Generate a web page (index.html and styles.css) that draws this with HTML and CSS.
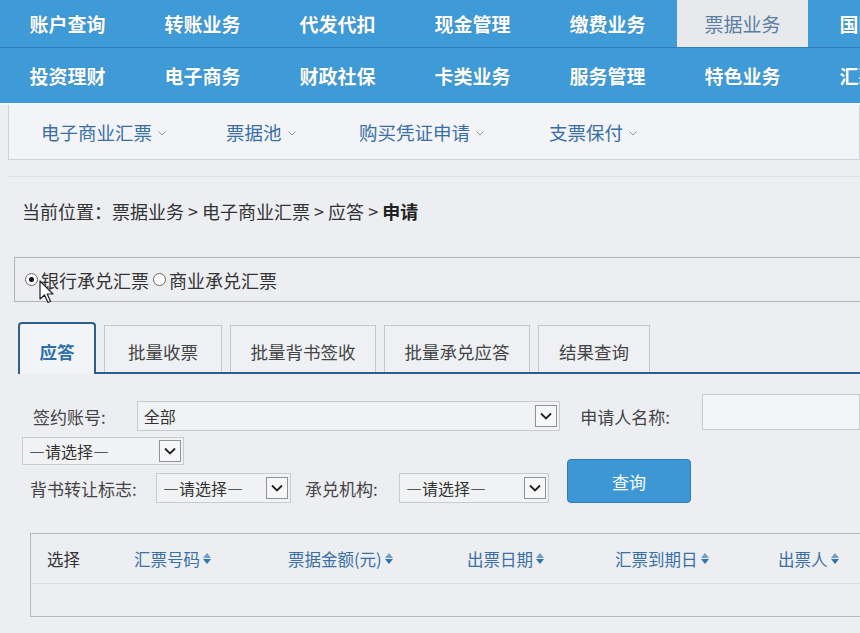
FILE: index.html
```html
<!DOCTYPE html>
<html lang="zh">
<head>
<meta charset="utf-8">
<link rel="stylesheet" href="styles.css">
</head>
<body>
<div class="topnav">
  <div class="navrow first">
    <div class="nav">账户查询</div>
    <div class="nav">转账业务</div>
    <div class="nav">代发代扣</div>
    <div class="nav">现金管理</div>
    <div class="nav">缴费业务</div>
    <div class="nav active">票据业务</div>
    <div class="nav">国际业务</div>
  </div>
  <div class="navrow">
    <div class="nav">投资理财</div>
    <div class="nav">电子商务</div>
    <div class="nav">财政社保</div>
    <div class="nav">卡类业务</div>
    <div class="nav">服务管理</div>
    <div class="nav">特色业务</div>
    <div class="nav">汇款业务</div>
  </div>
</div>
<div class="subnav">
  <div class="sub">电子商业汇票<svg class="caret" width="8" height="5" viewBox="0 0 8 5"><path d="M0.5 0.5 L4 4 L7.5 0.5" fill="none" stroke="#8a95a3" stroke-width="1"/></svg></div>
  <div class="sub">票据池<svg class="caret" width="8" height="5" viewBox="0 0 8 5"><path d="M0.5 0.5 L4 4 L7.5 0.5" fill="none" stroke="#8a95a3" stroke-width="1"/></svg></div>
  <div class="sub">购买凭证申请<svg class="caret" width="8" height="5" viewBox="0 0 8 5"><path d="M0.5 0.5 L4 4 L7.5 0.5" fill="none" stroke="#8a95a3" stroke-width="1"/></svg></div>
  <div class="sub">支票保付<svg class="caret" width="8" height="5" viewBox="0 0 8 5"><path d="M0.5 0.5 L4 4 L7.5 0.5" fill="none" stroke="#8a95a3" stroke-width="1"/></svg></div>
</div>
<div class="crumb">当前位置：票据业务 &gt; 电子商业汇票 &gt; 应答 &gt; <b>申请</b></div>
<div class="radiobox">
  <span class="radio on"></span><span class="rlabel">银行承兑汇票</span>
  <span class="radio"></span><span class="rlabel">商业承兑汇票</span>
  <svg class="cursor" width="16" height="24" viewBox="0 0 16 24"><path d="M1 1 L1 19 L5.5 15 L9 22.5 L11.5 21.3 L8.2 14 L14 14 Z" fill="#fff" stroke="#222" stroke-width="1.2" stroke-linejoin="round"/></svg>
</div>
<div class="tabs">
  <div class="tab active">应答</div>
  <div class="tab w2">批量收票</div>
  <div class="tab w3">批量背书签收</div>
  <div class="tab w3">批量承兑应答</div>
  <div class="tab w4">结果查询</div>
</div>
<div class="form">
  <div class="frow r1">
    <span class="label l1">签约账号:</span>
    <div class="select big"><span>全部</span><span class="arrow"><svg width="12" height="8" viewBox="0 0 12 8"><path d="M1 1.5 L6 6.5 L11 1.5" fill="none" stroke="#222" stroke-width="1.8"/></svg></span></div>
    <span class="label l2">申请人名称:</span>
    <div class="input"></div>
  </div>
  <div class="frow r2">
    <div class="select s1"><span>—请选择—</span><span class="arrow"><svg width="12" height="8" viewBox="0 0 12 8"><path d="M1 1.5 L6 6.5 L11 1.5" fill="none" stroke="#222" stroke-width="1.8"/></svg></span></div>
  </div>
  <div class="frow r3">
    <span class="label l3">背书转让标志:</span>
    <div class="select s2"><span>—请选择—</span><span class="arrow"><svg width="12" height="8" viewBox="0 0 12 8"><path d="M1 1.5 L6 6.5 L11 1.5" fill="none" stroke="#222" stroke-width="1.8"/></svg></span></div>
    <span class="label l4">承兑机构:</span>
    <div class="select s3"><span>—请选择—</span><span class="arrow"><svg width="12" height="8" viewBox="0 0 12 8"><path d="M1 1.5 L6 6.5 L11 1.5" fill="none" stroke="#222" stroke-width="1.8"/></svg></span></div>
    <div class="btn">查询</div>
  </div>
</div>
<div class="table">
  <div class="thead">
    <div class="th c1">选择</div>
    <div class="th c2 sort">汇票号码<span class="si"><i class="up"></i><i class="dn"></i></span></div>
    <div class="th c3 sort">票据金额(元)<span class="si"><i class="up"></i><i class="dn"></i></span></div>
    <div class="th c4 sort">出票日期<span class="si"><i class="up"></i><i class="dn"></i></span></div>
    <div class="th c5 sort">汇票到期日<span class="si"><i class="up"></i><i class="dn"></i></span></div>
    <div class="th c6 sort">出票人<span class="si"><i class="up"></i><i class="dn"></i></span></div>
  </div>
  <div class="tbody"></div>
</div>
</body>
</html>
```

FILE: styles.css
```css
* { box-sizing: border-box; }
html, body { margin: 0; padding: 0; }
body {
  width: 860px;
  height: 633px;
  overflow: hidden;
  background: #eceef2;
  font-family: "Noto Sans CJK SC", "Noto Sans", sans-serif;
  color: #333;
}
.topnav {
  background: #3f9bd7;
  width: 860px;
  overflow: hidden;
}
.navrow {
  display: flex;
  height: 52px;
  white-space: nowrap;
}
.navrow.first {
  height: 48px;
  border-bottom: 1px solid #2f7fb6;
}
.navrow + .navrow { height: 57px; border-bottom: 2px solid #f4f6f8; }
.nav {
  flex: 0 0 135px;
  color: #fff;
  font-weight: bold;
  font-size: 19px;
  display: flex;
  align-items: center;
  justify-content: center;
  text-shadow: 0 0 1px rgba(0,0,0,0.25);
}
.nav.active {
  background: #e8e9ed;
  color: #5a7fa3;
  font-weight: normal;
  margin: 0 2px;
  flex-basis: 131px;
  text-shadow: none;
}
.subnav {
  margin-left: 8px;
  height: 55px;
  border: 1px solid #cfd2d8;
  border-top: none;
  background: #f3f4f7;
  display: flex;
  align-items: center;
  padding-left: 32px;
}
.sub {
  color: #3a6fa5;
  font-size: 18.5px;
  display: flex;
  align-items: center;
}
.sub:nth-child(1) { width: 185px; }
.sub:nth-child(2) { width: 133px; }
.sub:nth-child(3) { width: 190px; }
.caret { margin-left: 6px; margin-top: 2px; }
.crumb {
  margin: 16px 0 0 8px;
  border-top: 1px solid #dfe1e6;
  height: 62px;
  padding: 21px 0 0 14px;
  font-size: 18px;
  color: #333;
}
.crumb b { color: #222; }
.radiobox {
  position: relative;
  margin: 19px 0 0 14px;
  height: 45px;
  border: 1px solid #b0b3b9;
  border-right: none;
  display: flex;
  align-items: center;
  padding-left: 10px;
  font-size: 18px;
  color: #333;
}
.radio {
  width: 13px;
  height: 13px;
  border: 1px solid #666;
  border-radius: 50%;
  background: #fff;
  display: inline-block;
  margin-right: 3px;
  position: relative;
}
.radio.on::after {
  content: "";
  position: absolute;
  left: 3px; top: 3px;
  width: 5px; height: 5px;
  border-radius: 50%;
  background: #111;
}
.rlabel { margin-right: 4px; }
.cursor { position: absolute; left: 24px; top: 22px; }
.tabs {
  margin: 22px 0 0 18px;
  height: 50px;
  display: flex;
  align-items: flex-end;
  gap: 8px;
  border-bottom: 2px solid #2c5f8a;
}
.tab {
  height: 47px;
  border: 1px solid #c4c7cd;
  border-bottom: none;
  display: flex;
  align-items: center;
  justify-content: center;
  font-size: 17.5px;
  color: #444;
  background: #eef0f3;
  padding-top: 4px;
}
.tab.active {
  width: 78px;
  border: 2px solid #2c5f8a;
  border-bottom: none;
  border-radius: 4px 4px 0 0;
  color: #2d6fa8;
  font-weight: bold;
  margin-bottom: -2px;
  height: 52px;
  background: #f3f4f7;
}
.tab.w2 { width: 118px; }
.tab.w3 { width: 146px; }
.tab.w4 { width: 112px; }
.form { padding-top: 23px; font-size: 17px; color: #444; }
.frow { display: flex; align-items: center; }
.r1 { height: 38px; }
.label { white-space: nowrap; }
.l1 { margin-left: 33px; width: 105px; }
.select {
  height: 30px;
  border: 1px solid #c8cbd0;
  background: #f1f2f4;
  display: flex;
  align-items: center;
  justify-content: space-between;
  padding: 0 2px 0 6px;
  color: #333;
  font-size: 16px;
}
.arrow {
  width: 22px;
  height: 22px;
  border: 1px solid #8e939b;
  background: #f7f7f8;
  display: flex;
  align-items: center;
  justify-content: center;
}
.big { width: 428px; }
.l2 { margin-left: 20px; width: 123px; }
.input {
  width: 160px;
  height: 36px;
  border: 1px solid #c8cbd0;
  background: #f4f5f7;
  margin-top: -8px;
}
.r2 { margin-top: 2px; }
.s1 { margin-left: 22px; width: 162px; height: 28px; }
.r3 { margin-top: 8px; }
.l3 { margin-left: 30px; width: 126px; }
.s2 { width: 135px; }
.l4 { margin-left: 14px; width: 94px; }
.s3 { width: 150px; }
.btn {
  margin-left: 18px;
  margin-top: -14px;
  width: 124px;
  height: 44px;
  background: #3d97d5;
  border: 1px solid #2f7bb5;
  border-radius: 4px;
  color: #fff;
  font-size: 17px;
  display: flex;
  align-items: center;
  justify-content: center;
}
.table {
  margin: 30px 0 0 30px;
  height: 84px;
  border: 1px solid #b5b8be;
  border-right: none;
}
.thead {
  display: flex;
  align-items: center;
  height: 50px;
  border-bottom: 1px solid #dcdee2;
  font-size: 16.5px;
}
.th { white-space: nowrap; display: flex; align-items: center; }
.c1 { margin-left: 16px; width: 87px; color: #333; }
.sort { color: #3a6fa5; }
.c2 { width: 154px; }
.c3 { width: 179px; }
.c4 { width: 148px; }
.c5 { width: 163px; }
.si { display: inline-flex; flex-direction: column; margin-left: 3px; gap: 1px; }
.si i { width: 0; height: 0; border-left: 4px solid transparent; border-right: 4px solid transparent; }
.si .up { border-bottom: 5px solid #6f9fc8; }
.si .dn { border-top: 5px solid #2f73a8; }
```
